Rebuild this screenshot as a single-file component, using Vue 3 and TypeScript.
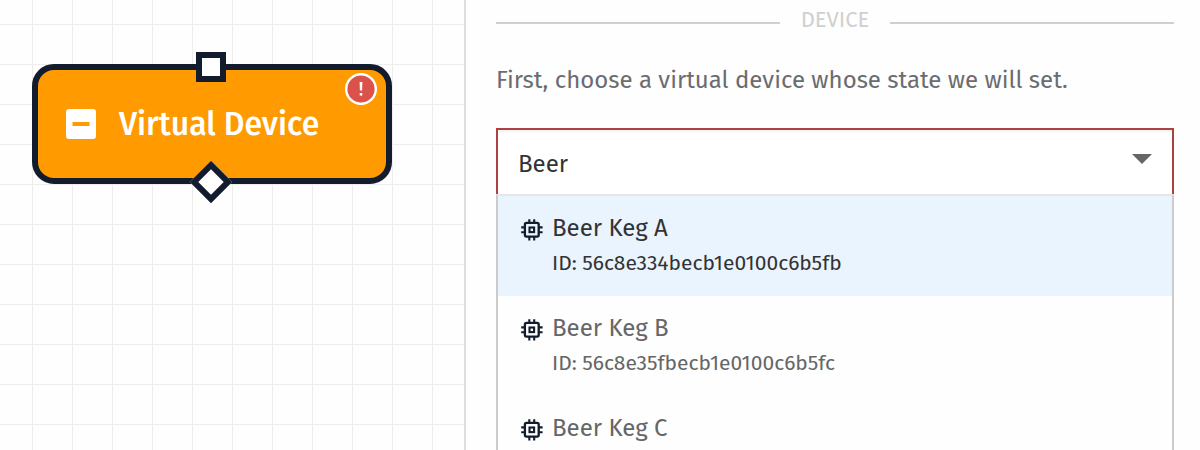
<script setup lang="ts">
import { ref } from 'vue'

interface Device {
  name: string
  id?: string
}

const query = ref('Beer')
const active = ref(0)
const collapsed = ref(false)
const devices: Device[] = [
  { name: 'Beer Keg A', id: '56c8e334becb1e0100c6b5fb' },
  { name: 'Beer Keg B', id: '56c8e35fbecb1e0100c6b5fc' },
  { name: 'Beer Keg C' },
]
</script>

<template>
  <main class="editor">
    <section class="canvas">
      <article class="node">
        <span class="port-in"></span>
        <button
          class="toggle"
          type="button"
          aria-labelledby="node-title"
          :aria-expanded="!collapsed"
          @click="collapsed = !collapsed"
        >
          <svg viewBox="0 0 30 30" width="30" height="30" aria-hidden="true">
            <rect width="30" height="30" rx="3" fill="#fff" />
            <rect x="6.5" y="13" width="17" height="4" fill="#ff9b00" />
          </svg>
        </button>
        <h2 id="node-title" class="node-title">Virtual Device</h2>
        <svg class="alert" viewBox="0 0 32 32" width="32" height="32" aria-hidden="true">
          <circle cx="16" cy="16" r="14.8" fill="#db524b" stroke="#fff" stroke-width="2.4" />
          <path d="M14.6 9h2.8l-.3 8.4h-2.2z" fill="#fff" />
          <rect x="14.7" y="20" width="2.6" height="2.6" fill="#fff" />
        </svg>
        <span class="port-out"></span>
      </article>
    </section>

    <section class="panel">
      <h3 class="divider">DEVICE</h3>
      <label class="hint" for="device">First, choose a virtual device whose state we will set.</label>
      <div class="combo">
        <div class="field">
          <input
            id="device"
            v-model="query"
            class="query"
            type="text"
            role="combobox"
            aria-expanded="true"
            aria-controls="device-list"
            autocomplete="off"
            spellcheck="false"
          />
          <svg class="caret" viewBox="0 0 20 10" width="20" height="10" aria-hidden="true">
            <path d="M0 0h20L10 10z" fill="#666" />
          </svg>
        </div>
        <ul id="device-list" class="menu" role="listbox">
          <li
            v-for="(device, i) in devices"
            :key="device.name"
            class="option"
            :class="{ active: i === active }"
            role="option"
            :aria-selected="i === active"
            @mouseenter="active = i"
          >
            <svg class="chip" viewBox="0 0 22 22" width="22" height="22" aria-hidden="true">
              <path
                d="M8.3 .3v3.6M13.2 .3v3.6M8.3 18v3.6M13.2 18v3.6M.2 8.4h3.6M.2 13.2h3.6M18 8.4h3.6M18 13.2h3.6"
                fill="none" stroke="#121c2d" stroke-width="2.1"
              />
              <rect x="3.9" y="3.9" width="13.8" height="13.8" rx="1.6" fill="none" stroke="#121c2d" stroke-width="2.3" />
              <rect x="8.5" y="8.5" width="4.6" height="4.6" fill="none" stroke="#121c2d" stroke-width="2.1" />
            </svg>
            <div>
              <div class="name">{{ device.name }}</div>
              <div v-if="device.id" class="ident">ID: {{ device.id }}</div>
            </div>
          </li>
        </ul>
      </div>
    </section>
  </main>
</template>

<style>
body {
  margin: 0;
}
</style>

<style scoped>
.editor {
  display: grid;
  grid-template-columns: minmax(424px, 464fr) 736fr;
  height: 100vh;
  overflow: hidden;
  background: #fff;
  font-family: "Fira Sans", "Noto Sans", sans-serif;
  color: #666;
}

.canvas {
  box-sizing: border-box;
  padding: 64px 32px;
  background-color: #fefefe;
  background-image:
    linear-gradient(to right, #ededed 1px, transparent 1px),
    linear-gradient(to bottom, #ededed 1px, transparent 1px);
  background-size: 40px 40px;
  background-position: 32px 24px;
}

.node {
  position: relative;
  box-sizing: border-box;
  display: flex;
  align-items: center;
  gap: 23px;
  width: 360px;
  height: 120px;
  padding: 0 28px;
  border: 6px solid #121c2d;
  border-radius: 22px;
  background: #ff9b00;
}

.toggle {
  display: block;
  width: 30px;
  height: 30px;
  padding: 0;
  border: 0;
  background: none;
  cursor: pointer;
}

.toggle svg {
  display: block;
}

.node-title {
  margin: 0;
  font-size: 32px;
  line-height: 40px;
  font-weight: 500;
  color: #fff;
}

.port-in,
.port-out {
  position: absolute;
  left: 158px;
  box-sizing: border-box;
  width: 30px;
  height: 30px;
  border: 6px solid #121c2d;
  background: #fff;
}

.port-in {
  top: -18px;
}

.port-out {
  bottom: -19px;
  transform: rotate(45deg);
}

.alert {
  position: absolute;
  top: 3px;
  right: 9px;
}

.panel {
  border-left: 2px solid #ddd;
  padding: 4px 26px 0 30px;
  background: #fefefe;
}

.divider {
  display: flex;
  align-items: center;
  gap: 21px;
  margin: 0;
  font-size: 22px;
  line-height: 32px;
  font-weight: 400;
  color: #d0d0d0;
}

.divider::before,
.divider::after {
  content: "";
  flex: 1;
  height: 2px;
  margin-top: 5px;
  background: #d0d0d0;
}

.hint {
  display: block;
  margin: 28px 0 32px;
  font-size: 24px;
  line-height: 32px;
  color: #6b6c6f;
  white-space: nowrap;
}

.field {
  display: flex;
  align-items: center;
  box-sizing: border-box;
  height: 66px;
  padding: 0 20px;
  border: 2px solid #ad4040;
  border-bottom: 0;
  background: #fff;
  box-shadow: inset 0 2px 2px rgba(0, 0, 0, 0.05);
}

.query {
  flex: 1;
  min-width: 0;
  padding: 4px 0 0;
  border: 0;
  outline: 0;
  background: none;
  font-family: inherit;
  font-size: 24px;
  line-height: 32px;
  color: #333;
}

.caret {
  margin-bottom: 6px;
}

.menu {
  margin: 0;
  padding: 0;
  border: 2px solid #ccc;
  border-top-color: #e6e6e6;
  list-style: none;
  background: #fefefe;
}

.option {
  display: flex;
  gap: 9px;
  box-sizing: border-box;
  min-height: 100px;
  padding: 16px 23px;
  color: #666;
}

.option.active {
  background: #eaf4fe;
  color: #333;
}

.chip {
  flex: none;
  margin-top: 7px;
}

.name {
  font-size: 24px;
  line-height: 32px;
}

.ident {
  margin-top: 3px;
  font-size: 21px;
  line-height: 32px;
}
</style>
